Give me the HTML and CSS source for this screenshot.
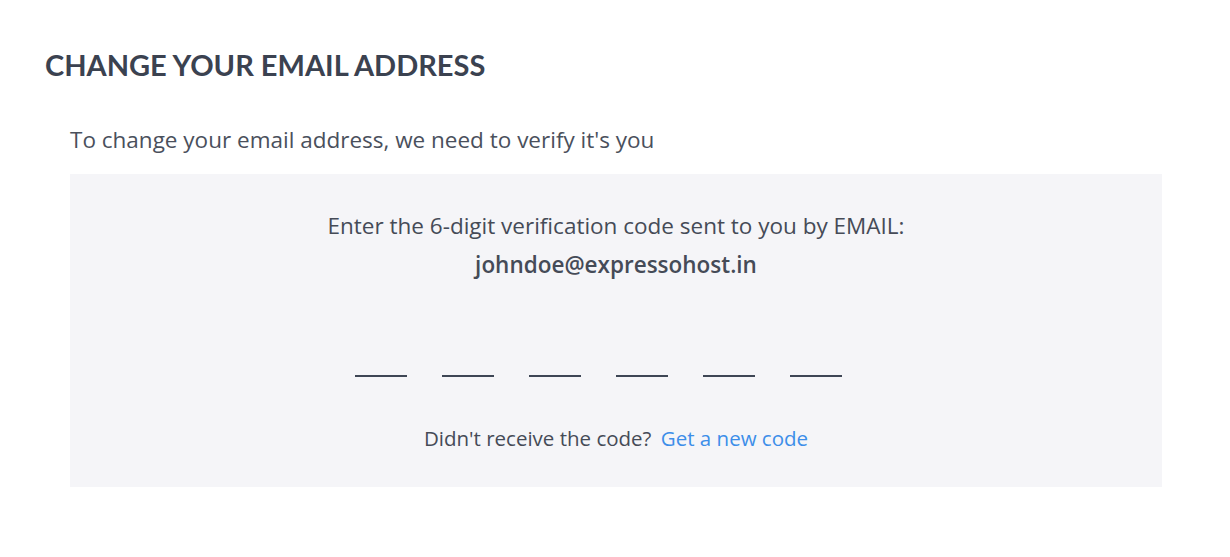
FILE: index.html
```html
<!DOCTYPE html>
<html lang="en">
<head>
  <meta charset="UTF-8">
  <title>Change your email address</title>
  <link rel="stylesheet" href="styles.css">
</head>
<body>
  <h1 class="page-title">CHANGE YOUR EMAIL ADDRESS</h1>

  <div class="verify">
    <p class="verify-intro">To change your email address, we need to verify it's you</p>

    <div class="verify-box">
      <p class="verify-prompt">Enter the 6-digit verification code sent to you by EMAIL:</p>
      <p class="verify-email">johndoe@expressohost.in</p>

      <div class="code-inputs">
        <input class="code-digit" type="text" maxlength="1">
        <input class="code-digit" type="text" maxlength="1">
        <input class="code-digit" type="text" maxlength="1">
        <input class="code-digit" type="text" maxlength="1">
        <input class="code-digit" type="text" maxlength="1">
        <input class="code-digit" type="text" maxlength="1">
      </div>

      <p class="resend">Didn't receive the code? <a href="#" class="resend-link">Get a new code</a></p>
    </div>
  </div>
</body>
</html>
```

FILE: styles.css
```css
body {
  margin: 0;
  font-family: "Open Sans", sans-serif;
  color: #454b57;
  background-color: #fff;
}
.page-title {
  margin: 0;
  padding: 48px 0 0 45px;
  font-family: Lato, sans-serif;
  font-weight: 700;
  font-size: 29px;
  line-height: 34px;
  color: #3b4250;
}
.verify {
  padding: 0 68px 0 70px;
}
.verify-intro {
  margin: 0;
  padding-top: 43px;
  font-size: 22.5px;
  line-height: 30px;
  color: #4a505c;
}
.verify-box {
  margin-top: 19px;
  height: 313px;
  box-sizing: border-box;
  padding-top: 37px;
  background-color: #f5f5f8;
  text-align: center;
}
.verify-prompt {
  margin: 0;
  font-size: 22.5px;
  line-height: 30px;
  color: #454b57;
}
.verify-email {
  margin: 9px 0 0;
  font-size: 22.5px;
  line-height: 30px;
  font-weight: 600;
  color: #454b57;
}
.code-inputs {
  display: flex;
  justify-content: center;
  gap: 35px;
  margin-top: 67px;
  padding-right: 35px;
}
.code-digit {
  width: 52px;
  height: 30px;
  padding: 0;
  border: none;
  border-bottom: 2px solid #3e4655;
  background: transparent;
  box-sizing: border-box;
  font-family: "Open Sans", sans-serif;
  font-size: 20px;
  text-align: center;
  outline: none;
}
.resend {
  margin: 47px 0 0;
  font-size: 20.5px;
  line-height: 28px;
  color: #454b57;
}
.resend-link {
  margin-left: 4px;
  color: #3d8ee9;
  text-decoration: none;
}
```
